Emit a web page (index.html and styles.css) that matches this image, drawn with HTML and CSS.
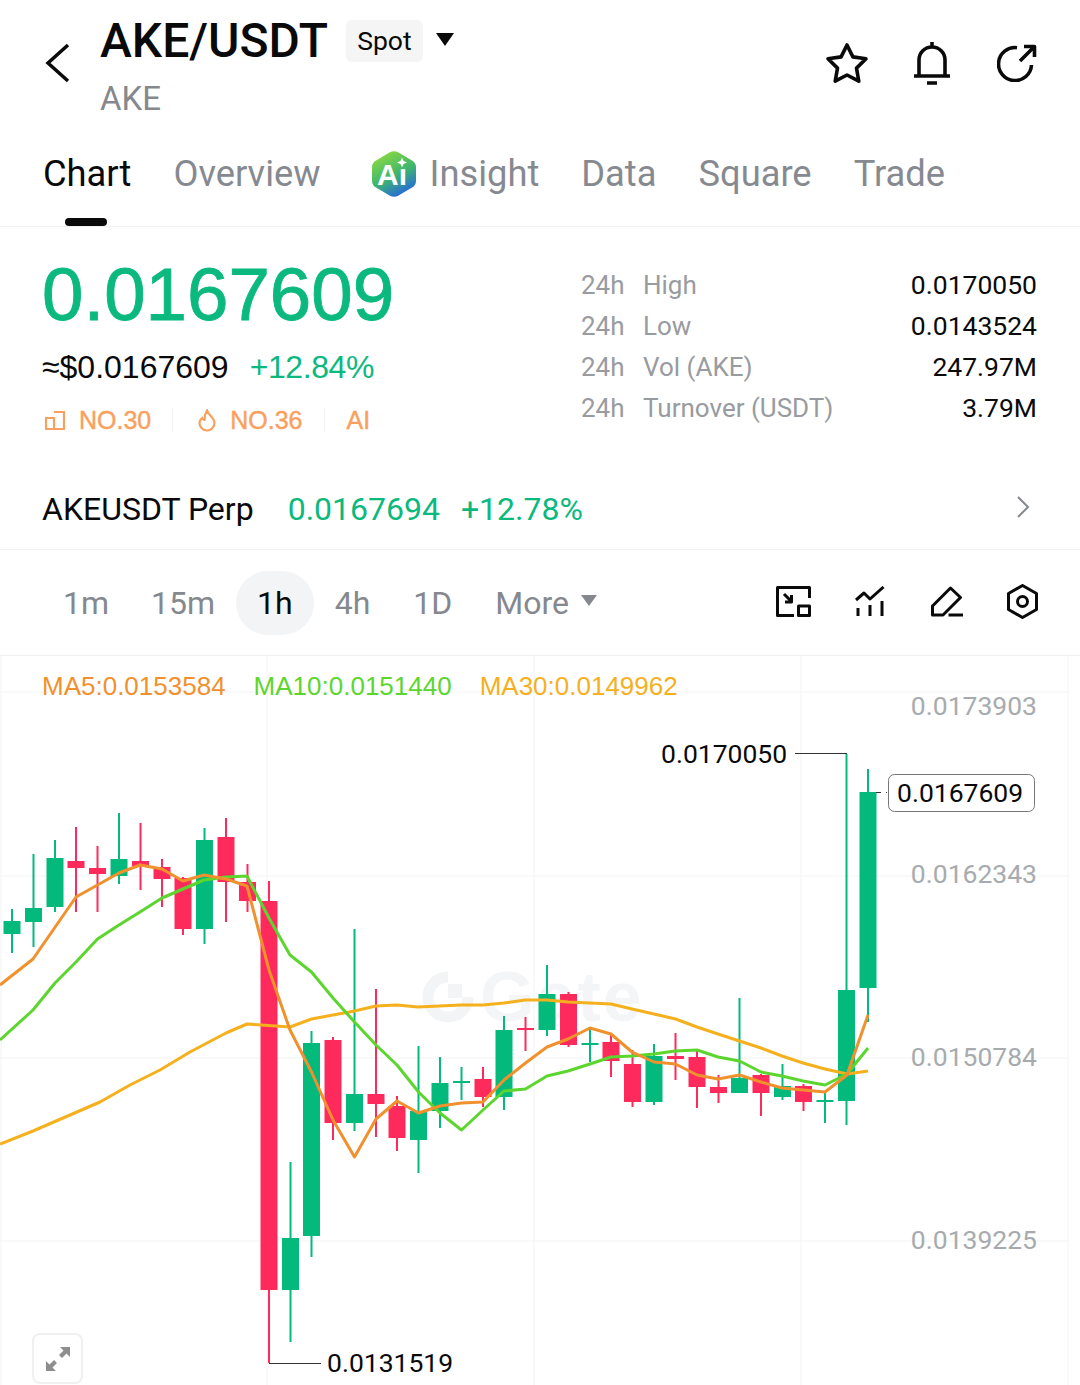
FILE: index.html
```html
<!DOCTYPE html>
<html lang="en">
  <head>
    <meta charset="UTF-8" />
    <meta name="viewport" content="width=device-width, initial-scale=1.0" />
    <title>AKE/USDT Chart</title>
    <link rel="stylesheet" href="styles.css">
  </head>
  <body>
    <header class="top">
      <svg class="back" width="26" height="40" viewBox="0 0 26 40"><path d="M23 2 L3 20 L23 38" /></svg>
      <div class="pair">
        <div class="pair-row">
          <h1>AKE/USDT</h1>
          <span class="spot">Spot</span>
          <span class="spot-caret"></span>
        </div>
        <div class="coin">AKE</div>
      </div>
      <div class="top-icons">
        <svg class="ico" width="44" height="42" viewBox="0 0 44 42"><path d="M22 3 L27.9 14.9 L41 16.8 L31.5 26.1 L33.8 39.2 L22 33 L10.2 39.2 L12.5 26.1 L3 16.8 L16.1 14.9 Z" /></svg>
        <svg class="ico bell" width="38" height="44" viewBox="0 0 38 44"><path d="M19 1 V6 M6 35 V19 A13 13 0 0 1 32 19 V35 M1 35 H37 M14 42 H24" /></svg>
        <svg class="ico" width="40" height="38" viewBox="0 0 40 38"><path d="M20 3.7 A16.5 16.5 0 1 0 34.5 21 M23 17 L36 4 M27 2.5 H37.5 V13" /></svg>
      </div>
    </header>

    <nav class="tabs">
      <a class="tab active">Chart</a>
      <a class="tab">Overview</a>
      <a class="tab insight">
        <svg width="46" height="50" viewBox="0 0 46 50">
          <defs>
            <linearGradient id="hexFill" x1="0.2" y1="0" x2="0.7" y2="1">
              <stop offset="0" stop-color="#8fdc3c" />
              <stop offset="0.55" stop-color="#3fb56f" />
              <stop offset="1" stop-color="#2463e6" />
            </linearGradient>
          </defs>
          <path d="M18.5 3.5 Q23 1 27.5 3.5 L41 11.5 Q45 14 45 18 V32 Q45 36 41 38.5 L27.5 46.5 Q23 49 18.5 46.5 L5 38.5 Q1 36 1 32 V18 Q1 14 5 11.5 Z" fill="url(#hexFill)" />
          <text x="21" y="36" class="hex-text">Aı</text>
          <path d="M31 8.5 L32.5 12 L36 13.5 L32.5 15 L31 18.5 L29.5 15 L26 13.5 L29.5 12 Z" fill="white" />
        </svg>
        Insight
      </a>
      <a class="tab">Data</a>
      <a class="tab">Square</a>
      <a class="tab">Trade</a>
    </nav>

    <section class="stats">
      <div class="stats-left">
        <div class="price">0.0167609</div>
        <div class="sub">
          <span class="usd">≈$0.0167609</span>
          <span class="change">+12.84%</span>
        </div>
        <div class="tags">
          <svg width="20" height="20" viewBox="0 0 20 20"><path d="M1 8 H9 V19 H1 Z M9 2 H19 V19 H9" /></svg>
          <span class="tag">NO.30</span>
          <i class="tag-sep"></i>
          <svg class="flame" width="18" height="23" viewBox="0 0 18 23"><path d="M9 1.5 C10 6 16.5 8.5 16.5 14 A7.5 7.5 0 0 1 1.5 14 C1.5 11.5 2.8 10 4 9 C4.5 10.5 5.5 11 6.5 11 C6.5 8 7 4.5 9 1.5 Z" /></svg>
          <span class="tag">NO.36</span>
          <i class="tag-sep"></i>
          <span class="tag">AI</span>
        </div>
      </div>
      <dl class="stats-right">
        <div class="stat"><dt><span>24h</span>High</dt><dd>0.0170050</dd></div>
        <div class="stat"><dt><span>24h</span>Low</dt><dd>0.0143524</dd></div>
        <div class="stat"><dt><span>24h</span>Vol (AKE)</dt><dd>247.97M</dd></div>
        <div class="stat"><dt><span>24h</span>Turnover (USDT)</dt><dd>3.79M</dd></div>
      </dl>
    </section>

    <section class="perp">
      <span class="perp-name">AKEUSDT Perp</span>
      <span class="perp-price">0.0167694</span>
      <span class="perp-change">+12.78%</span>
      <svg class="chevron" width="14" height="24" viewBox="0 0 14 24"><path d="M2 2 L12 12 L2 22" /></svg>
    </section>

    <section class="intervals">
      <a class="iv">1m</a>
      <a class="iv">15m</a>
      <a class="iv active">1h</a>
      <a class="iv">4h</a>
      <a class="iv day">1D</a>
      <a class="iv more">More</a>
      <span class="iv-caret"></span>
      <div class="tools">
        <svg class="tool" width="35" height="31" viewBox="0 0 35 31"><path d="M18 29.5 H1.5 V1.5 H33.5 V12 M22.5 20 H33.5 V29.5 H22.5 Z M8 8 L15 15 M15.5 9 V16 H9" /></svg>
        <svg class="tool lines" width="30" height="30" viewBox="0 0 30 30"><path d="M1 14 L9 7 L15 13 L28.5 1 M3 22 V30 M15 19 V30 M27 15 V30" /></svg>
        <svg class="tool" width="32" height="31" viewBox="0 0 32 31"><path d="M1.5 20 L19.5 2 L29.5 11.5 L12 29 H1.5 Z M17.5 29 H32" /></svg>
        <svg class="tool" width="31" height="35" viewBox="0 0 31 35"><path d="M15.5 1.5 L29.5 9.5 V25.5 L15.5 33.5 L1.5 25.5 V9.5 Z" /><circle cx="15.5" cy="17.5" r="5" /></svg>
      </div>
    </section>

    <section class="chart">
      <svg id="chart" width="1080" height="729" viewBox="0 656 1080 729"></svg>
      <div class="legend">
        <span class="ma5">MA5:0.0153584</span>
        <span class="ma10">MA10:0.0151440</span>
        <span class="ma30">MA30:0.0149962</span>
      </div>
      <button class="expand">
        <svg width="26" height="26" viewBox="0 0 26 26"><path d="M15 1 H25 V11 L21.5 7.5 L17 12 L14 9 L18.5 4.5 Z M11 25 H1 V15 L4.5 18.5 L9 14 L12 17 L7.5 21.5 Z" /></svg>
      </button>
    </section>

    <script src="chart.js"></script>
  </body>
</html>
```

FILE: styles.css
```css
* {
  box-sizing: border-box;
}
html,
body {
  margin: 0;
  height: 1385px;
  overflow: hidden;
  background-color: white;
}
body {
  font-family: Roboto, sans-serif;
  color: #0a0a0a;
}

/* header */
.top {
  height: 132px;
  display: flex;
  align-items: flex-start;
  position: relative;
}
.back {
  margin: 43px 0 0 45px;
  fill: none;
  stroke: #0a0a0a;
  stroke-width: 3.5;
}
.pair {
  margin: 12px 0 0 29px;
}
.pair-row {
  display: flex;
  align-items: center;
}
h1 {
  margin: 0;
  font-size: 48px;
  line-height: 58px;
  font-weight: 500;
}
.spot {
  margin-left: 18px;
  width: 77px;
  height: 42px;
  line-height: 42px;
  text-align: center;
  font-size: 26.5px;
  background-color: #f5f5f5;
  border-radius: 6px;
}
.spot-caret {
  margin: 0 0 4px 13px;
  border-left: 9px solid transparent;
  border-right: 9px solid transparent;
  border-top: 13px solid #0a0a0a;
}
.coin {
  margin-top: 4px;
  font-size: 33px;
  line-height: 50px;
  color: #85888d;
}
.top-icons {
  margin: 41px 0 0 auto;
  padding-right: 43px;
  display: flex;
  align-items: center;
  gap: 44px;
  height: 44px;
}
.ico {
  fill: none;
  stroke: #0a0a0a;
  stroke-width: 3.6;
  stroke-linejoin: round;
}
.ico.bell {
  margin-right: 2px;
}

/* tabs */
.tabs {
  height: 95px;
  padding-left: 43px;
  display: flex;
  align-items: flex-start;
  gap: 42px;
  border-bottom: 1px solid #f0f1f2;
}
.tab {
  font-size: 36.3px;
  line-height: 84px;
  color: #868a90;
  position: relative;
}
.tab.active {
  color: #0a0a0a;
}
.tab.active::after {
  content: "";
  position: absolute;
  left: 22px;
  bottom: -10px;
  width: 42px;
  height: 8px;
  border-radius: 4px;
  background-color: #0a0a0a;
}
.insight {
  margin-left: 8px;
  display: flex;
  align-items: center;
  gap: 13px;
}
.hex-text {
  font-family: "Liberation Sans", sans-serif;
  font-size: 30px;
  font-weight: 700;
  fill: white;
  text-anchor: middle;
}

/* price block */
.stats {
  height: 244px;
  display: flex;
  padding: 0 43px 0 42px;
}
.stats-left {
  width: 539px;
  font-family: "Liberation Sans", sans-serif;
}
.price {
  margin-top: 25px;
  font-size: 74.5px;
  line-height: 85px;
  color: #0bb97e;
  -webkit-text-stroke: 0.9px #0bb97e;
}
.sub {
  margin-top: 10px;
  display: flex;
  gap: 21px;
  font-size: 32px;
  line-height: 40px;
}
.change {
  color: #0bb97e;
  letter-spacing: -0.4px;
}
.tags {
  margin-top: 18px;
  padding-left: 3px;
  display: flex;
  align-items: center;
  height: 30px;
}
.tags svg {
  fill: none;
  stroke: #f9a05e;
  stroke-width: 2.2;
}
.tag {
  margin-left: 14px;
  font-size: 25px;
  color: #f9a05e;
  -webkit-text-stroke: 0.4px #f9a05e;
}
.tag-sep {
  width: 1px;
  height: 24px;
  margin: 0 0 0 21px;
  background-color: #f2f2f2;
}
.tag-sep + .tag {
  margin-left: 22px;
}
.flame {
  margin-left: 25px;
}
.stats-right {
  flex: 1;
  margin: 37px 0 0;
}
.stat {
  height: 41px;
  display: flex;
  justify-content: space-between;
  align-items: center;
  font-size: 26.5px;
}
.stat dt {
  font-size: 26px;
  color: #989ba0;
}
.stat dt span {
  display: inline-block;
  width: 62px;
}
.stat dd {
  margin: 0;
}

/* perp row */
.perp {
  height: 79px;
  padding: 0 50px 2px 42px;
  display: flex;
  align-items: center;
  border-bottom: 1px solid #f0f1f2;
  font-size: 32px;
}
.perp-price {
  margin-left: 34px;
  color: #0bb97e;
}
.perp-change {
  margin-left: 21px;
  color: #0bb97e;
}
.chevron {
  margin-left: auto;
  margin-top: -4px;
  fill: none;
  stroke: #85888d;
  stroke-width: 2;
}

/* interval row */
.intervals {
  height: 106px;
  padding: 0 42px;
  display: flex;
  align-items: center;
  border-bottom: 1px solid #f0f1f2;
}
.iv {
  height: 64px;
  line-height: 64px;
  padding: 0 21px;
  font-size: 32px;
  color: #85888d;
  border-radius: 32px;
}
.iv.active {
  color: #0a0a0a;
  background-color: #f3f4f5;
}
.iv.day {
  margin-left: 1px;
}
.iv.more {
  margin-left: 1px;
}
.iv-caret {
  margin: 0 0 4px -9px;
  border-left: 8px solid transparent;
  border-right: 8px solid transparent;
  border-top: 11px solid #85888d;
}
.tools {
  margin-left: auto;
  display: flex;
  align-items: center;
  gap: 44px;
  margin-top: -3px;
}
.tool {
  fill: none;
  stroke: #0a0a0a;
  stroke-width: 3;
  stroke-linejoin: round;
}
.tool.lines {
  margin-right: 2px;
}

/* chart */
.chart {
  position: relative;
  height: 729px;
}
#chart {
  display: block;
}
.legend {
  position: absolute;
  left: 42px;
  top: 15px;
  display: flex;
  gap: 28px;
  font-family: "Liberation Sans", sans-serif;
  font-size: 26px;
  line-height: 30px;
}
.ma5 {
  color: #f0912e;
}
.ma10 {
  color: #5cd62e;
}
.ma30 {
  color: #f5b01e;
}
.expand {
  position: absolute;
  left: 32px;
  top: 677px;
  width: 51px;
  height: 51px;
  padding: 0;
  display: flex;
  align-items: center;
  justify-content: center;
  background-color: white;
  border: 2px solid #f0f0f0;
  border-radius: 8px;
}
.expand svg {
  fill: #8e8e8e;
}
.axis {
  font-family: Roboto, sans-serif;
  font-size: 26.5px;
  fill: #a8abae;
  text-anchor: end;
}
.mark {
  font-family: Roboto, sans-serif;
  font-size: 26.5px;
  fill: #0a0a0a;
}
.watermark {
  font-family: "Liberation Sans", sans-serif;
  font-size: 70px;
  font-weight: 700;
  letter-spacing: 2px;
  fill: #f4f5f6;
}
```

FILE: chart.js
```js
const svg = document.getElementById("chart");
const NS = "http://www.w3.org/2000/svg";

const GREEN = "#03b97b";
const RED = "#ff2a5c";

function add(tag, attrs, text) {
  const el = document.createElementNS(NS, tag);
  Object.keys(attrs).forEach((k) => el.setAttribute(k, attrs[k]));
  if (text) el.textContent = text;
  svg.appendChild(el);
  return el;
}

// x, wick top, wick bottom, body top, body bottom, up?
const candles = [
  [12, 909, 953, 921, 934, 1], [33.5, 854, 947, 908, 922, 1], [55, 840, 912, 858, 907, 1],
  [76, 827, 912, 861, 868, 0], [97.5, 846, 912, 868, 874, 0], [119, 813, 884, 859, 876, 1],
  [140.5, 823, 890, 861, 866, 0], [162, 859, 907, 867, 879, 0], [183, 877, 935, 878, 929, 0],
  [204.5, 828, 944, 840, 929, 1], [226, 818, 922, 837, 882, 0], [247.5, 864, 912, 882, 901, 0],
  [269, 881, 1363, 901, 1290, 0], [290.5, 1162, 1342, 1238, 1290, 1], [311.5, 1031, 1257, 1043, 1236, 1],
  [333, 1037, 1140, 1040, 1123, 0], [354.5, 929, 1131, 1094, 1123, 1], [376, 989, 1137, 1094, 1104, 0],
  [397, 1096, 1151, 1106, 1138, 0], [418.5, 1046, 1173, 1111, 1140, 1], [440, 1057, 1128, 1083, 1111, 1],
  [461.5, 1067, 1100, 1081, 1083, 1], [483, 1067, 1107, 1079, 1097, 0], [504, 1016, 1110, 1030, 1097, 1],
  [525.5, 1017, 1051, 1028, 1030, 0], [547, 965, 1036, 994, 1030, 1], [568.5, 992, 1047, 994, 1045, 0],
  [590, 1029, 1062, 1043, 1045, 1], [611, 1033, 1077, 1042, 1061, 0], [632.5, 1050, 1107, 1064, 1102, 0],
  [654, 1044, 1105, 1056, 1102, 1], [675.5, 1033, 1080, 1056, 1059, 0], [697, 1049, 1108, 1057, 1087, 0],
  [718.5, 1075, 1103, 1087, 1093, 0], [739.5, 998, 1093, 1078, 1093, 1], [761, 1074, 1116, 1075, 1093, 0],
  [782.5, 1064, 1100, 1086, 1097, 1], [803.5, 1084, 1111, 1086, 1102, 0], [825, 1093, 1123, 1100, 1102, 1],
  [846.5, 754, 1125, 990, 1101, 1], [868, 769, 1022, 792, 988, 1],
];

const ma5 = "0,985 33,959 76,897 97.5,885 119,873 140,865 162,869 183,881 204,875 226,879 247,886 269,970 290,1030 311.5,1072 333,1120 354.5,1157 376,1119 397,1101 418.5,1113 440,1106 461.5,1103 483,1102 504,1080 525.5,1063 547,1047 568,1039 590,1028 611,1034 632,1052 654,1062 675.5,1064 697,1075 718,1079 739.5,1075 761,1082 782,1088 803,1090 825,1092 847,1075 868,1015";
const ma10 = "0,1040 33,1010 55,983 76,962 97.5,939 119,925 140,912 162,898 183,889 204,880 226,877 247,876 269,918 290,955 311.5,972 333,998 354.5,1022 376,1045 397,1065 418.5,1092 440,1113 461.5,1130 483,1110 504,1091 525.5,1089 547,1076 568,1071 590,1064 611,1057 632,1056 654,1054 675,1051 697,1050 718,1057 739.5,1061 761,1072 782,1076 803,1081 825,1085 847,1074 868,1048";
const ma30 = "0,1144 33,1131 70,1115 100,1102 130,1085 160,1070 190,1052 226,1033 247,1024 290,1027 311.5,1019 333,1015 354.5,1011 376,1006 397,1005 418,1007 461,1005 483,1005 504,1003 525,1000 547,1000 568,1002 590,1003 611,1004 632,1009 654,1014 675.5,1019 697,1027 718,1034 739.5,1041 761,1048 782,1056 803,1063 825,1069 847,1074 868,1071";

// watermark
add("path", {
  d: "M448 977 A20 20 0 1 0 468 997",
  fill: "none",
  stroke: "#f3f4f5",
  "stroke-width": 11,
});
add("rect", { x: 448, y: 984, width: 14, height: 14, fill: "#f3f4f5" });
add("text", { x: 480, y: 1021, class: "watermark" }, "Gate");

// grid
[692, 876, 1058, 1241].forEach((y) => {
  add("line", { x1: 0, x2: 1068, y1: y, y2: y, stroke: "#f2f3f4", "stroke-width": 1 });
});
[1, 267, 534, 801, 1068].forEach((x) => {
  add("line", { x1: x, x2: x, y1: 656, y2: 1385, stroke: "#f2f3f4", "stroke-width": 1 });
});

// candles
candles.forEach(([x, top, bottom, bodyTop, bodyBottom, up]) => {
  const color = up ? GREEN : RED;
  add("rect", { x: x - 1, y: top, width: 2, height: bottom - top, fill: color });
  add("rect", { x: x - 8.5, y: bodyTop, width: 17, height: bodyBottom - bodyTop, fill: color });
});

// moving averages
[[ma30, "#f5b01e"], [ma10, "#5cd62e"], [ma5, "#f0912e"]].forEach(([points, color]) => {
  add("polyline", { points, fill: "none", stroke: color, "stroke-width": 3, "stroke-linejoin": "round" });
});

// axis labels
[["0.0173903", 715], ["0.0162343", 883], ["0.0150784", 1066], ["0.0139225", 1249]].forEach(([label, y]) => {
  add("text", { x: 1037, y, class: "axis" }, label);
});

// high / low markers
add("path", { d: "M795 753.5 H847", stroke: "#333", "stroke-width": 1, fill: "none" });
add("text", { x: 661, y: 763, class: "mark" }, "0.0170050");
add("path", { d: "M269 1363.5 H321", stroke: "#333", "stroke-width": 1, fill: "none" });
add("text", { x: 327, y: 1372, class: "mark" }, "0.0131519");

// last price tag
add("path", { d: "M876 792.5 H887", stroke: "#333", "stroke-width": 1, "stroke-dasharray": "5 5", fill: "none" });
add("rect", { x: 888.5, y: 774.5, width: 146, height: 37, rx: 6, fill: "white", stroke: "#777", "stroke-width": 1 });
add("text", { x: 897, y: 802, class: "mark" }, "0.0167609");
```
